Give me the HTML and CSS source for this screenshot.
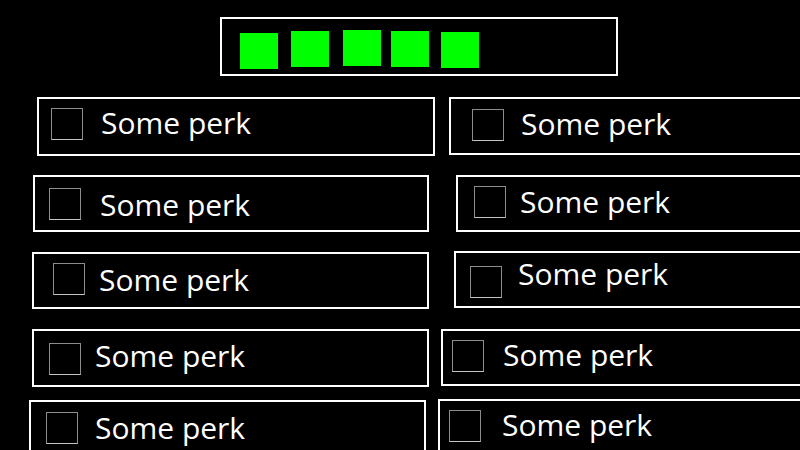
FILE: index.html
```html
<!DOCTYPE html>
<html lang="en">
<head>
<meta charset="utf-8">
<title>Perks</title>
<link rel="stylesheet" href="styles.css">
</head>
<body>
<header class="top">
  <div class="meter">
    <span class="pip pip1"></span>
    <span class="pip pip2"></span>
    <span class="pip pip3"></span>
    <span class="pip pip4"></span>
    <span class="pip pip5"></span>
  </div>
</header>
<main class="perks">
  <label class="perk c1"><span class="box"></span><span class="label">Some perk</span></label>
  <label class="perk c2"><span class="box"></span><span class="label">Some perk</span></label>
  <label class="perk c3"><span class="box"></span><span class="label">Some perk</span></label>
  <label class="perk c4"><span class="box"></span><span class="label">Some perk</span></label>
  <label class="perk c5"><span class="box"></span><span class="label">Some perk</span></label>
  <label class="perk c6"><span class="box"></span><span class="label">Some perk</span></label>
  <label class="perk c7"><span class="box"></span><span class="label">Some perk</span></label>
  <label class="perk c8"><span class="box"></span><span class="label">Some perk</span></label>
  <label class="perk c9"><span class="box"></span><span class="label">Some perk</span></label>
  <label class="perk c10"><span class="box"></span><span class="label">Some perk</span></label>
</main>
</body>
</html>
```
FILE: styles.css
```css
html, body {
  margin: 0;
  padding: 0;
  background: #000;
  width: 800px;
  height: 450px;
  overflow: hidden;
  font-family: "Open Sans", "Noto Sans", sans-serif;
  color: #fff;
}

.top {
  padding: 17px 0 0 220px;
}

.meter {
  box-sizing: border-box;
  width: 398px;
  height: 59px;
  border: 2px solid #fff;
  display: flex;
  align-items: flex-start;
}

.pip {
  display: block;
  width: 38px;
  height: 36px;
  background: #00ff00;
}
.pip1 { margin: 14px 0 0 18px; }
.pip2 { margin: 12px 0 0 13px; }
.pip3 { margin: 11px 0 0 14px; }
.pip4 { margin: 12px 0 0 10px; }
.pip5 { margin: 13px 0 0 12px; }

.perks {
  margin-top: 21px;
  display: grid;
  grid-template-columns: 437px 363px;
  grid-template-rows: 78px 76px 78px 71px 60px;
}

.perk {
  box-sizing: border-box;
  border: 2px solid #fff;
  display: flex;
  align-items: flex-start;
  justify-self: start;
  align-self: start;
  width: 398px;
  height: 58px;
}

.box {
  flex: none;
  box-sizing: border-box;
  width: 32px;
  height: 32px;
  border: 1px solid #8c8c8c;
  border-bottom-color: #c4c4c4;
}

.label {
  font-size: 30px;
  font-weight: 500;
  line-height: 32px;
  height: 32px;
  white-space: nowrap;
}

.c1 { margin: 0 0 0 37px; width: 398px; height: 59px; padding: 9px 0 0 12px; }
.c1 .label { margin: -1px 0 0 18px; }
.c2 { margin: 0 0 0 12px; height: 58px; padding: 10px 0 0 21px; }
.c2 .label { margin: -1px 0 0 17px; }
.c3 { margin: 0 0 0 33px; width: 396px; height: 57px; padding: 11px 0 0 14px; }
.c3 .label { margin: 1px 0 0 19px; }
.c4 { margin: 0 0 0 19px; height: 57px; padding: 9px 0 0 16px; }
.c4 .label { margin: 0 0 0 14px; }
.c5 { margin: 1px 0 0 32px; width: 397px; height: 57px; padding: 9px 0 0 19px; }
.c5 .label { margin: 1px 0 0 14px; }
.c6 { margin: 0 0 0 17px; height: 57px; padding: 13px 0 0 14px; }
.c6 .label { margin: -8px 0 0 16px; }
.c7 { margin: 0 0 0 32px; width: 397px; height: 58px; padding: 12px 0 0 15px; }
.c7 .label { margin: -3px 0 0 14px; }
.c8 { margin: 0 0 0 4px; height: 57px; padding: 9px 0 0 9px; }
.c8 .label { margin: -1px 0 0 19px; }
.c9 { margin: 0 0 0 29px; width: 397px; height: 60px; padding: 10px 0 0 15px; }
.c9 .label { margin: 0 0 0 17px; }
.c10 { margin: -1px 0 0 1px; height: 60px; padding: 9px 0 0 9px; }
.c10 .label { margin: -1px 0 0 21px; }
```
